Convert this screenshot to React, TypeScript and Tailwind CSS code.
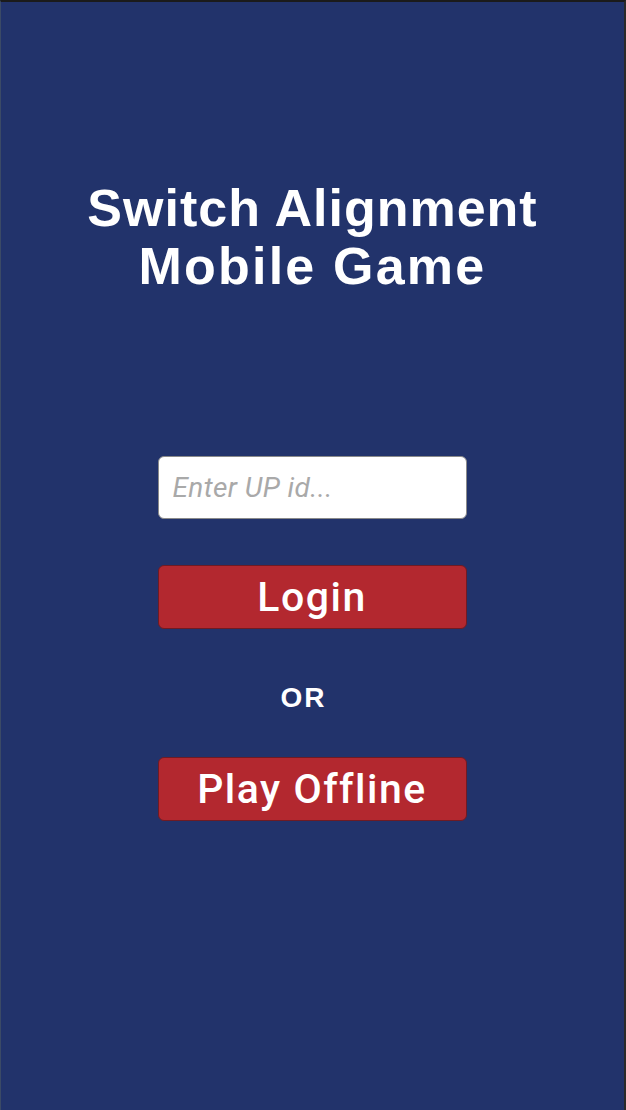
export default function App() {
  return (
    <div className="h-[1110px] w-full bg-[#22336b] border-t-2 border-l border-r-2 border-t-[#1b1b1b] border-l-[#3b4a66] border-r-[#2a2a2a] flex flex-col items-center font-['Liberation_Sans',Arial,sans-serif]">
      {/* Title */}
      <h1 className="mt-[177px] text-center text-white text-[52px] leading-[58px] font-bold tracking-[1px]">
        Switch Alignment
        <br />
        <span className="tracking-[2.2px]">Mobile Game</span>
      </h1>

      {/* Login form */}
      <div className="mt-[161px] w-[309px] mr-[1px] flex flex-col items-center">
        <input
          type="text"
          placeholder="Enter UP id..."
          className="w-full h-[63px] rounded-[6px] bg-white border border-[#8a8a8a] px-[14px] text-[28px] italic tracking-[0.4px] font-['Roboto',sans-serif] text-[#333] placeholder:text-[#a9a9a9] outline-none"
        />
        <button className="mt-[46px] w-full h-[64px] rounded-[6px] bg-[#b3282f] border border-[#6e1b24] text-white text-[41px] tracking-[1.5px] font-medium font-['Roboto',sans-serif] leading-none flex items-center justify-center">
          Login
        </button>
        <div className="mt-[55px] mr-[17px] text-white text-[28px] leading-[28px] font-bold tracking-[2px]">
          OR
        </div>
        <button className="mt-[45px] w-full h-[64px] rounded-[6px] bg-[#b3282f] border border-[#6e1b24] text-white text-[41px] tracking-[1.5px] font-medium font-['Roboto',sans-serif] leading-none flex items-center justify-center">
          Play Offline
        </button>
      </div>
    </div>
  )
}
